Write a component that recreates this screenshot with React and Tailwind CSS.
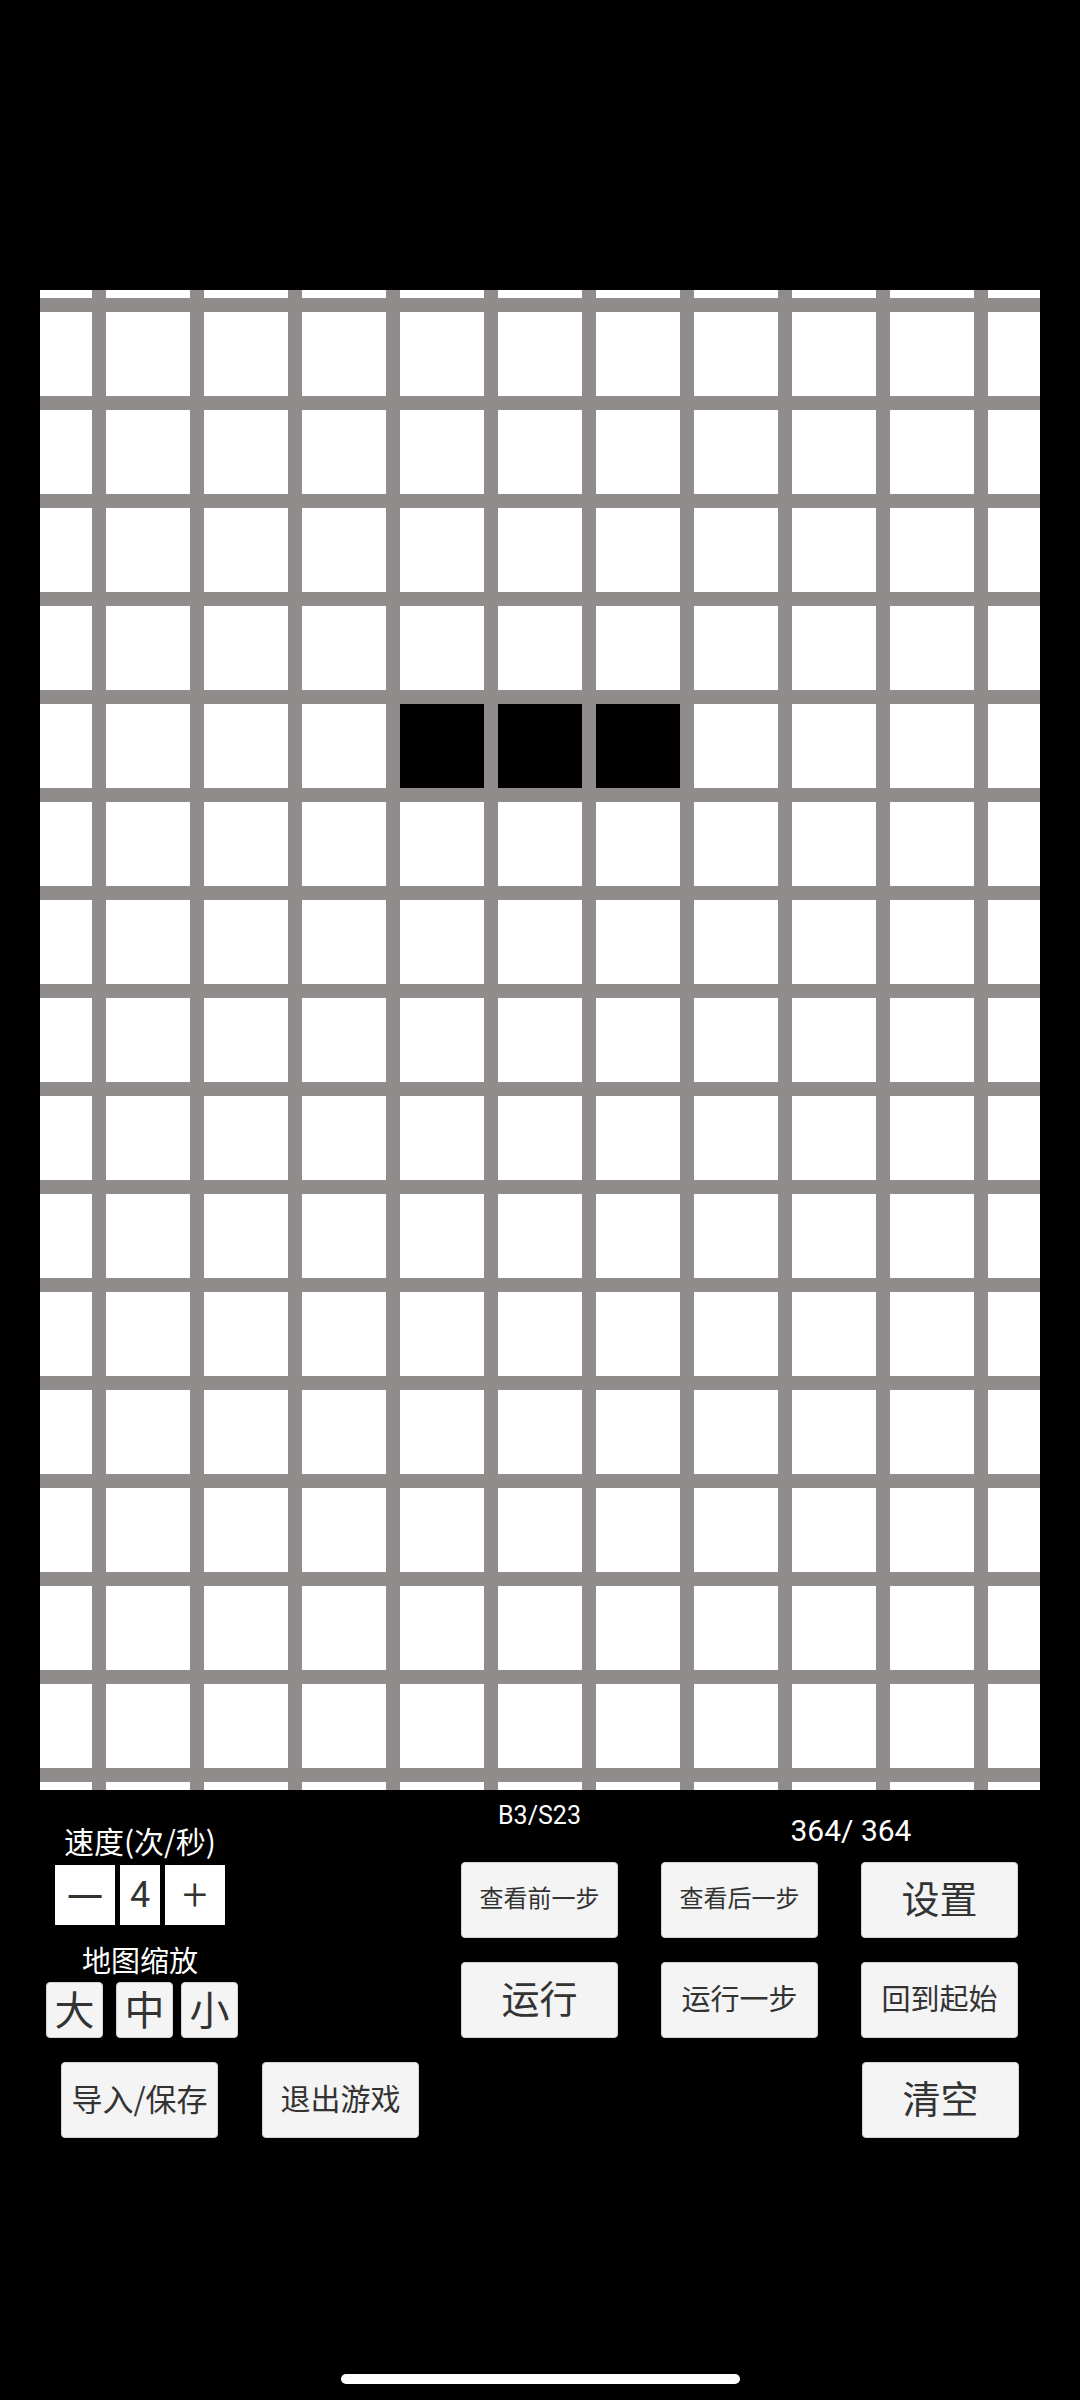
import React from 'react'

const cjk = { fontFamily: '"Noto Sans CJK SC", "Noto Sans", sans-serif' }
const latin = { fontFamily: 'Roboto, "Noto Sans", sans-serif' }

const hLines = Array.from({ length: 16 }, (_, i) => 8 + i * 98)
const vLines = Array.from({ length: 10 }, (_, i) => 52 + i * 98)
const liveCells = [360, 458, 556]

function Board() {
    return (
        <div className="ml-[40px] w-[1000px] h-[1500px] bg-white">
            <svg width="1000" height="1500" viewBox="0 0 1000 1500" className="block">
                {hLines.map((y) => (
                    <rect key={'h' + y} x="0" y={y} width="1000" height="14" fill="#8f8c8b" />
                ))}
                {vLines.map((x) => (
                    <rect key={'v' + x} x={x} y="0" width="14" height="1500" fill="#8f8c8b" />
                ))}
                {liveCells.map((x) => (
                    <rect key={'c' + x} x={x} y="414" width="84" height="84" fill="#000" />
                ))}
            </svg>
        </div>
    )
}

function GameButton({ children, size }) {
    return (
        <button
            type="button"
            style={cjk}
            className={`w-[157px] h-[76px] pb-[6px] bg-[#f4f4f4] border border-[#d4d4d4] rounded-[4px] text-[#333333] leading-none flex items-center justify-center ${size}`}
        >
            {children}
        </button>
    )
}

function SmallButton({ children }) {
    return (
        <button
            type="button"
            style={cjk}
            className="w-[57px] h-[56px] pb-[4px] bg-[#f4f4f4] border border-[#d4d4d4] rounded-[4px] text-[#333333] text-[40px] leading-none flex items-center justify-center"
        >
            {children}
        </button>
    )
}

export default function App() {
    return (
        <div className="w-[1080px] h-[2400px] bg-black flex flex-col">
            <div className="h-[290px] shrink-0" />
            <Board />

            <div className="flex">
                {/* speed + zoom */}
                <div className="w-[280px] flex flex-col items-center pt-[35px]">
                    <div style={cjk} className="text-white text-[30px] leading-none">速度(次/秒)</div>
                    <div className="flex mt-[10px] gap-[5px]">
                        <div style={cjk} className="w-[60px] h-[60px] bg-white text-[#333333] text-[36px] leading-none flex items-center justify-center">一</div>
                        <div style={latin} className="w-[40px] h-[60px] bg-white text-[#333333] text-[36px] leading-none flex items-center justify-center">4</div>
                        <div style={latin} className="w-[60px] h-[60px] bg-white text-[#333333] text-[44px] font-light leading-none flex items-center justify-center">+</div>
                    </div>
                    <div style={cjk} className="text-white text-[29px] leading-none mt-[20px]">地图缩放</div>
                    <div className="flex mt-[8px] ml-[4px]">
                        <SmallButton>大</SmallButton>
                        <div className="ml-[13px]"><SmallButton>中</SmallButton></div>
                        <div className="ml-[8px]"><SmallButton>小</SmallButton></div>
                    </div>
                </div>

                {/* status + main buttons */}
                <div className="ml-[181px] flex flex-col">
                    <div className="flex h-[72px]">
                        <div style={latin} className="w-[157px] text-center text-white text-[25px] leading-none pt-[13px]">B3/S23</div>
                        <div style={latin} className="w-[240px] ml-[113px] text-center text-white text-[30px] leading-none pt-[26px]">364/ 364</div>
                    </div>
                    <div className="grid grid-cols-[157px_157px_157px] gap-x-[43px] gap-y-[24px]">
                        <GameButton size="text-[24px]">查看前一步</GameButton>
                        <GameButton size="text-[24px]">查看后一步</GameButton>
                        <GameButton size="text-[38px]">设置</GameButton>
                        <GameButton size="text-[38px]">运行</GameButton>
                        <GameButton size="text-[29px]">运行一步</GameButton>
                        <GameButton size="text-[29px]">回到起始</GameButton>
                    </div>
                </div>
            </div>

            <div className="flex mt-[24px] pl-[61px]">
                <GameButton size="text-[31px]">导入/保存</GameButton>
                <div className="ml-[44px]">
                    <GameButton size="text-[30px]">退出游戏</GameButton>
                </div>
                <div className="ml-[443px]">
                    <GameButton size="text-[38px]">清空</GameButton>
                </div>
            </div>

            <div className="flex-1" />
            <div className="flex justify-center pb-[16px]">
                <div className="w-[399px] h-[10px] rounded-full bg-white" />
            </div>
        </div>
    )
}
